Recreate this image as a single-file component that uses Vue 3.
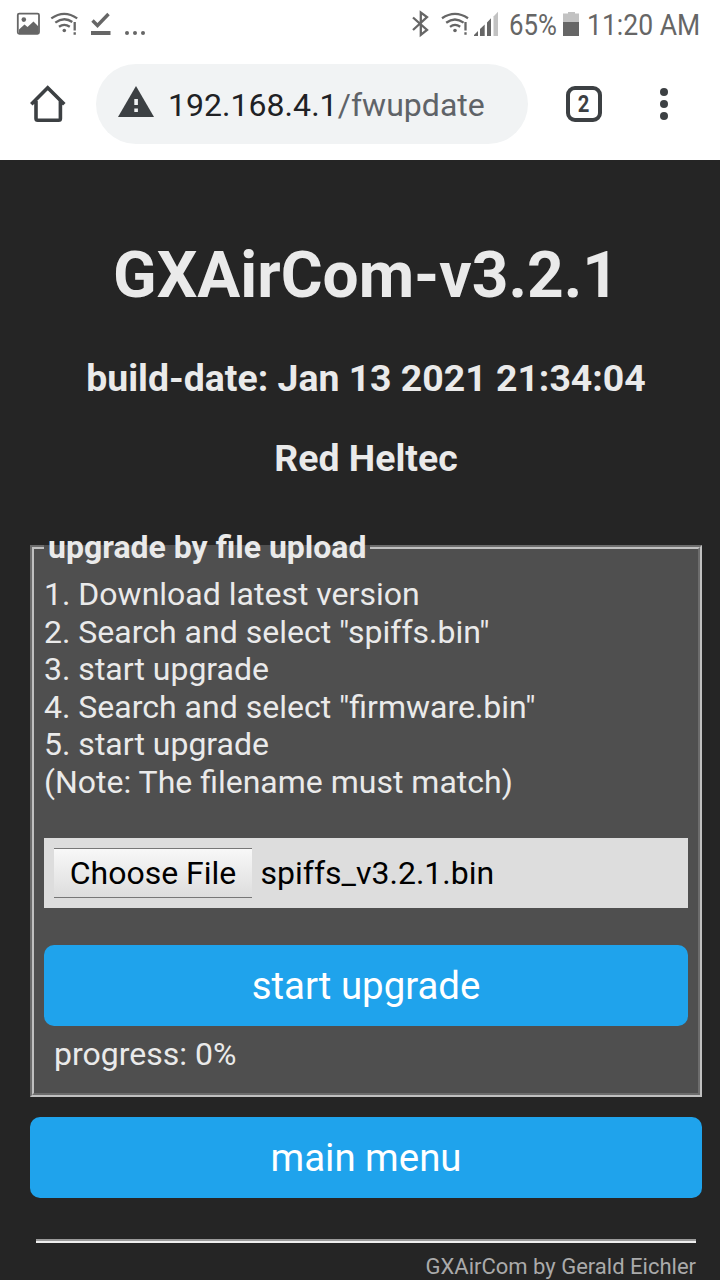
<script setup>
const steps = [
  '1. Download latest version',
  '2. Search and select "spiffs.bin"',
  '3. start upgrade',
  '4. Search and select "firmware.bin"',
  '5. start upgrade',
  '(Note: The filename must match)',
]
</script>

<template>
  <div class="screen">
    <header class="status">
      <svg class="status-left" width="160" height="48" viewBox="0 0 160 48">
        <rect x="17.8" y="13.6" width="21.2" height="20.2" rx="1.5" fill="none" stroke="#666" stroke-width="1.8" />
        <circle cx="23.8" cy="19.6" r="2.3" fill="#666" />
        <path d="M19 29.500l5.500-5 3 2.500 6-5.500 5 5V34H19z" fill="#666" />
        <g fill="none" stroke="#666" stroke-width="2.300">
          <path d="M51.300 18.400Q64.200 9.400 77.200 18.400M55.300 22.700Q64 16.200 72.300 22M59 26.800Q64.200 23 69.800 26.800" />
          <path d="M74.700 22v8.500M74.700 32.300v2.500" />
        </g>
        <circle cx="64.300" cy="30.500" r="1.800" fill="#666" />
        <path d="M92.500 20.500l5 5 11-11.500" fill="none" stroke="#666" stroke-width="3.400" />
        <rect x="91" y="31" width="19.500" height="4" fill="#666" />
        <circle cx="127" cy="33" r="2" fill="#666" />
        <circle cx="135" cy="33" r="2" fill="#666" />
        <circle cx="143" cy="33" r="2" fill="#666" />
      </svg>
      <svg class="status-signal" width="100" height="48" viewBox="400 0 100 48">
        <path d="M413 17.500L427 30l-6.200 4.800V12.500l6.200 4.700L413 30" fill="none" stroke="#666" stroke-width="2.300" />
        <g fill="none" stroke="#666" stroke-width="2.300">
          <path d="M442 18.200Q455 9.400 468 18.200M446.200 22.700Q455 16.200 463.600 22.700M450 26.800Q455 23 460.200 26.800" />
          <path d="M465.500 22v8.500M465.500 32.300v2.500" />
        </g>
        <circle cx="455" cy="30.500" r="1.800" fill="#666" />
        <path d="M474 36v-1l4-4v5zM480 36v-7l4.700-4.500V36zM487 36V22.500l4-4.300V36z" fill="#666" />
        <path d="M493.500 36V16.500l4.500-4.800V36z" fill="#c2c2c2" />
      </svg>
      <span class="percent">65%</span>
      <svg class="battery" width="16" height="24" viewBox="0 0 16 24">
        <path d="M0 1.500h5V0h7v1.500h4V10H0z" fill="#c2c2c2" />
        <rect y="10" width="16" height="14" fill="#666" />
      </svg>
      <span class="clock">11:20 AM</span>
    </header>

    <nav class="browser">
      <svg class="home" width="36" height="38" viewBox="30 85 36 38">
        <path d="M31.300 104.300L47.700 87.800l16.600 16.500M36 101v17.500q0 1.700 1.700 1.700h21q1.700 0 1.700-1.700V101" fill="none" stroke="#3c4043" stroke-width="3.600" />
      </svg>
      <div class="address">
        <svg width="36" height="31" viewBox="0 0 36 31">
          <path d="M18 0l18 31H0z" fill="#3c4043" />
          <path d="M16.300 13h3.600v6h-3.600zM16.300 22.500h3.600v3.600h-3.600z" fill="#f1f3f4" />
        </svg>
        <span class="url">192.168.4.1<i>/fwupdate</i></span>
      </div>
      <div class="tabs"><span>2</span></div>
      <div class="more"><b></b><b></b><b></b></div>
    </nav>

    <main class="page">
      <h1><span>GXAirCom-v3.2.1</span></h1>
      <h2><span class="build">build-date: Jan 13 2021 21:34:04</span></h2>
      <h2 class="device"><span>Red Heltec</span></h2>

      <fieldset>
        <legend><span>upgrade by file upload</span></legend>
        <div class="steps">
          <div v-for="step in steps" :key="step"><span>{{ step }}</span></div>
        </div>
        <div class="file">
          <button class="choose" type="button"><span>Choose File</span></button>
          <span class="filename">spiffs_v3.2.1.bin</span>
        </div>
        <button class="action" type="button">start upgrade</button>
        <div class="progress"><span>progress: 0%</span></div>
      </fieldset>

      <button class="action menu" type="button">main menu</button>
      <div class="rule"></div>
      <footer><span>GXAirCom by Gerald Eichler</span></footer>
    </main>
  </div>
</template>

<style>
body { margin: 0; background: #252525; }
</style>

<style scoped>
.screen { width: 720px; height: 1280px; overflow: hidden; background: #252525; font-family: Roboto, sans-serif; }
.screen * { box-sizing: border-box; }
span { white-space: nowrap; }
svg { display: block; flex: none; }
.status { height: 48px; display: flex; align-items: flex-start; background: #fff; color: #666; font-size: 29px; line-height: 50px; }
.status-signal { margin-left: 240px; }
.percent { width: 54px; margin-left: 9px; transform: scaleX(0.89); transform-origin: left; }
.battery { margin: 12px 8px 0 0; }
.clock { transform: scaleX(0.915); transform-origin: left; }
.browser { height: 112px; background: #fff; display: flex; align-items: center; padding-left: 30px; }
.home { margin-right: 30px; }
.address { width: 432px; height: 80px; border-radius: 40px; background: #f1f3f4; display: flex; align-items: center; padding-left: 22px; }
.address svg { margin-top: -5px; }
.url { margin-left: 14px; padding-top: 2px; font-size: 32px; color: #202124; letter-spacing: 0.04px; }
.url i { font-style: normal; color: #5f6368; }
.tabs { width: 36px; height: 36px; margin-left: 38px; border: 4px solid #3c4043; border-radius: 9px; display: flex; align-items: center; justify-content: center; font-size: 23px; font-weight: 700; color: #3c4043; }
.tabs span { transform: scaleX(0.88); }
.more { margin-left: 58px; display: flex; flex-direction: column; gap: 4px; }
.more b { width: 8px; height: 8px; border-radius: 50%; background: #3c4043; }
.page { height: 1120px; padding: 76px 18px 0 30px; color: #eaeaea; }
h1 { margin: 0; height: 80px; font-size: 64px; line-height: 80px; text-align: center; }
h2 { margin: 40px 0 0; height: 44px; font-size: 37.4px; line-height: 44px; text-align: center; }
h2.device { margin-top: 36px; }
fieldset { margin: 45px 0 0; padding: 0 10px; height: 572px; border: 4px groove #c0c0c0; min-width: 0; background: #4f4f4f; }
legend { margin: 0; padding: 0 4px; height: 44px; line-height: 44px; font-size: 32px; font-weight: 700; }
.steps { font-size: 32px; line-height: 37.5px; height: 225px; margin-top: 7px; }
.file { height: 70px; margin-top: 37px; background: #ddd; color: #000; display: flex; align-items: center; padding-left: 10px; font-size: 32px; }
.choose { width: 198px; height: 50px; padding: 0; border: 0 solid #777; border-width: 1px 0; background: linear-gradient(#f8f8f8, #ddd); font: 32px Roboto, sans-serif; color: #000; }
.filename { margin-left: 8.5px; }
.action { display: block; width: 100%; height: 81px; margin: 37px 0 0; padding: 0; border: 0; border-radius: 10px; background: #1fa3ec; color: #fff; font: 38.4px Roboto, sans-serif; }
.progress { font-size: 32px; line-height: 38px; margin-top: 9px; padding-left: 10px; }
.action.menu { margin-top: 20px; }
.rule { margin: 41px 6px 0; height: 4px; border-top: 2px solid #9a9a9a; background: #eee; }
footer { margin: 10px 6px 0 0; text-align: right; font-size: 22px; line-height: 28px; color: #aaa; }
</style>
